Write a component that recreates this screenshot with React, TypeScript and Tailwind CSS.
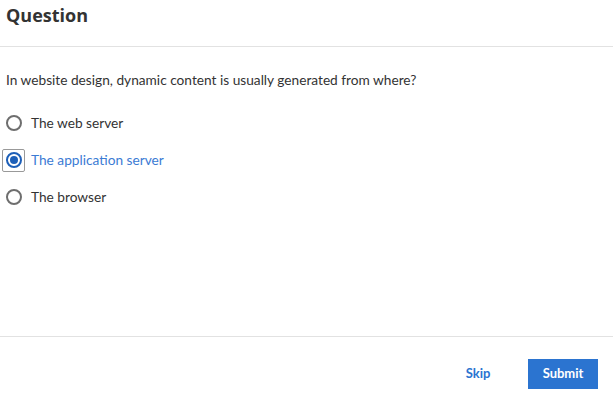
import React from "react";

const options = ["The web server", "The application server", "The browser"];

function Radio({ checked }: { checked: boolean }) {
  return (
    <span
      className={`flex h-[16px] w-[16px] items-center justify-center rounded-full border-2 ${
        checked ? "border-[#1d5fb8]" : "border-[#6e6e6e]"
      }`}
    >
      {checked && <span className="h-[8px] w-[8px] rounded-full bg-[#1d5fb8]" />}
    </span>
  );
}

export default function App() {
  const selected = 1;
  return (
    <div className="flex h-[406px] w-[613px] flex-col bg-white text-[#333333]" style={{ fontFamily: "Lato, 'Open Sans', sans-serif" }}>
      <div className="h-[47px] border-b border-[#e2e2e2] px-[6px] pt-[3px]">
        <h1 className="text-[18px] font-bold leading-[24px] text-[#333333]" style={{ fontFamily: "'Open Sans', sans-serif" }}>
          Question
        </h1>
      </div>
      <div className="flex-1 px-[6px] pt-[24px]">
        <p className="text-[13.7px] leading-[18px]">
          In website design, dynamic content is usually generated from where?
        </p>
        <div className="mt-[22px] flex flex-col gap-[13px]">
          {options.map((o, i) => (
            <div key={o} className="flex h-[24px] items-center">
              <span
                className={`-ml-[4px] flex h-[23px] w-[23px] items-center justify-center rounded-[2px] border ${
                  i === selected ? "border-[#999999]" : "border-transparent"
                }`}
              >
                <Radio checked={i === selected} />
              </span>
              <span className={`ml-[6px] text-[13.7px] ${i === selected ? "text-[#3b7bd4]" : "text-[#333333]"}`}>{o}</span>
            </div>
          ))}
        </div>
      </div>
      <div className="flex h-[70px] items-start justify-end border-t border-[#e2e2e2] pr-[15px] pt-[22px]">
        <button className="mr-[15px] flex h-[30px] w-[70px] items-center justify-center text-[13px] font-bold text-[#2b74d0]">
          Skip
        </button>
        <button className="flex h-[30px] w-[70px] items-center justify-center bg-[#2b74d0] text-[13px] font-bold text-white">
          Submit
        </button>
      </div>
    </div>
  );
}
